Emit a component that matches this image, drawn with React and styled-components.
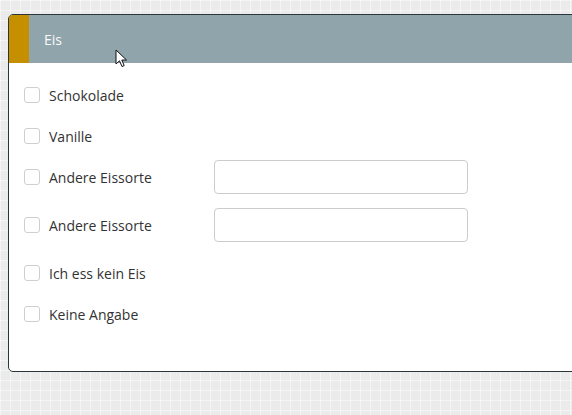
import React from 'react';
import styled, { createGlobalStyle } from 'styled-components';

const GlobalStyle = createGlobalStyle`
  html, body {
    margin: 0;
    overflow: hidden;
  }
  body {
    background-color: #ebebeb;
    background-image:
      linear-gradient(to right, rgba(255, 255, 255, 0.45) 1px, transparent 1px),
      linear-gradient(to bottom, rgba(255, 255, 255, 0.45) 1px, transparent 1px);
    background-size: 10px 10px;
    font-family: 'Open Sans', 'Noto Sans', sans-serif;
  }
`;

const Page = styled.div`
  padding: 14px 0 0 8px;
  height: 415px;
  box-sizing: border-box;
  overflow: hidden;
`;

const Panel = styled.section`
  position: relative;
  width: 620px;
  border: 1px solid #2b363a;
  border-radius: 5px;
  background: #fff;
  overflow: hidden;
`;

const Header = styled.header`
  display: flex;
  align-items: center;
  height: 48px;
  background: #90a4ab;
`;

const Stripe = styled.div`
  width: 20px;
  align-self: stretch;
  background: #c58f00;
`;

const Title = styled.h2`
  margin: 0 0 0 15px;
  font-size: 14px;
  font-weight: 400;
  color: #fafafa;
`;

const Body = styled.div`
  display: flex;
  flex-direction: column;
  padding: 22px 0 47px 15px;
`;

const Row = styled.label`
  display: flex;
  align-items: center;
  height: ${({ $withInput }) => ($withInput ? '34px' : '20px')};
  margin-top: ${({ $withInput }) => ($withInput ? '14px' : '21px')};

  &:first-child {
    margin-top: 0;
  }
`;

const Box = styled.span`
  width: 16px;
  height: 16px;
  box-sizing: border-box;
  border: 1px solid #cfcfcf;
  border-radius: 3px;
  background: #fff;
  flex-shrink: 0;
`;

const Text = styled.span`
  width: 174px;
  padding-left: 9px;
  box-sizing: border-box;
  font-size: 14px;
  color: #333;
  white-space: nowrap;
`;

const Field = styled.input`
  width: 254px;
  height: 34px;
  box-sizing: border-box;
  border: 1px solid #ccc;
  border-radius: 4px;
  background: #fff;
  outline: none;
`;

const Pointer = styled.svg`
  position: absolute;
  left: 106px;
  top: 34px;
`;

const options = [
  { label: 'Schokolade' },
  { label: 'Vanille' },
  { label: 'Andere Eissorte', input: true },
  { label: 'Andere Eissorte', input: true },
  { label: 'Ich ess kein Eis' },
  { label: 'Keine Angabe' },
];

export default function App() {
  return (
    <>
      <GlobalStyle />
      <Page>
        <Panel>
          <Header>
            <Stripe />
            <Title>Eis</Title>
          </Header>
          <Body>
            {options.map((o, i) => (
              <Row key={i} $withInput={o.input}>
                <Box />
                <Text>{o.label}</Text>
                {o.input && <Field type="text" />}
              </Row>
            ))}
          </Body>
          <Pointer width="14" height="20" viewBox="0 0 14 20">
            <path
              d="M1 1 L1 15 L4.5 11.8 L7 17.5 L9.2 16.6 L6.8 11 L11.5 11 Z"
              fill="#fff"
              stroke="#111"
              strokeWidth="1"
              strokeLinejoin="round"
            />
          </Pointer>
        </Panel>
      </Page>
    </>
  );
}
